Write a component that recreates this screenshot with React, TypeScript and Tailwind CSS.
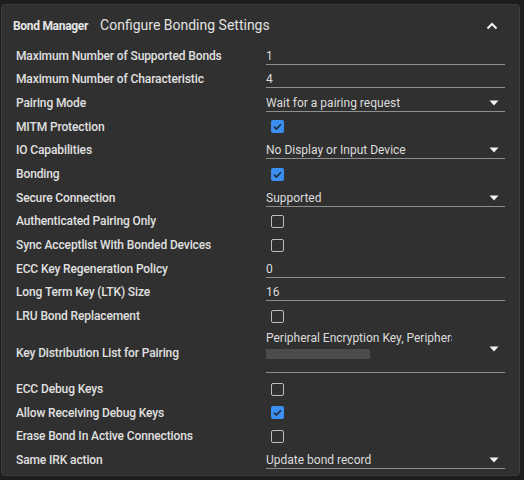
import React from "react";

type Row =
  | { label: string; kind: "input"; value: string }
  | { label: string; kind: "select"; value: string }
  | { label: string; kind: "check"; checked: boolean }
  | { label: string; kind: "multi"; value: string };

const rows: Row[] = [
  { label: "Maximum Number of Supported Bonds", kind: "input", value: "1" },
  { label: "Maximum Number of Characteristic", kind: "input", value: "4" },
  { label: "Pairing Mode", kind: "select", value: "Wait for a pairing request" },
  { label: "MITM Protection", kind: "check", checked: true },
  { label: "IO Capabilities", kind: "select", value: "No Display or Input Device" },
  { label: "Bonding", kind: "check", checked: true },
  { label: "Secure Connection", kind: "select", value: "Supported" },
  { label: "Authenticated Pairing Only", kind: "check", checked: false },
  { label: "Sync Acceptlist With Bonded Devices", kind: "check", checked: false },
  { label: "ECC Key Regeneration Policy", kind: "input", value: "0" },
  { label: "Long Term Key (LTK) Size", kind: "input", value: "16" },
  { label: "LRU Bond Replacement", kind: "check", checked: false },
  { label: "Key Distribution List for Pairing", kind: "multi", value: "Peripheral Encryption Key, Periphera" },
  { label: "ECC Debug Keys", kind: "check", checked: false },
  { label: "Allow Receiving Debug Keys", kind: "check", checked: true },
  { label: "Erase Bond In Active Connections", kind: "check", checked: false },
  { label: "Same IRK action", kind: "select", value: "Update bond record" },
];

function Arrow() {
  return (
    <svg width="10" height="6" viewBox="0 0 10 6" className="shrink-0">
      <path d="M0.5 0.5 L9.5 0.5 L5 5.5 Z" fill="#f2f2f2" />
    </svg>
  );
}

function Check({ checked }: { checked: boolean }) {
  if (checked) {
    return (
      <div className="ml-[5px] w-[13px] h-[13px] rounded-[2px] bg-[#3a8ff0] flex items-center justify-center">
        <svg width="11" height="11" viewBox="0 0 11 11">
          <path d="M2 5.6 L4.4 8 L9 3.2" fill="none" stroke="#1f2a3a" strokeWidth="1.6" />
        </svg>
      </div>
    );
  }
  return <div className="ml-[5px] w-[13px] h-[13px] rounded-[2px] border-[1.5px] border-[#bdbdbd]" />;
}

function Value({ row }: { row: Row }) {
  if (row.kind === "check") {
    return (
      <div className="h-full flex items-center">
        <Check checked={row.checked} />
      </div>
    );
  }
  if (row.kind === "multi") {
    return (
      <div className="h-full pb-[4px] flex flex-col">
        <div className="flex-1 border-b border-[#8e8e8e] flex items-start pt-[3px]">
          <div className="flex-1 min-w-0">
            <div className="text-[12px] leading-[15px] text-[#dcdcdc] whitespace-nowrap overflow-hidden w-[186px]">
              {row.value}
            </div>
            <div className="mt-[3px] w-[104px] h-[10px] bg-[#4b4b4b]" />
          </div>
          <div className="pt-[15px] pr-[6px]">
            <Arrow />
          </div>
        </div>
      </div>
    );
  }
  return (
    <div className="h-full pb-[3px] flex flex-col">
      <div className="flex-1 border-b border-[#8e8e8e] flex items-end justify-between">
        <span className="text-[12px] leading-[15px] text-[#dcdcdc] whitespace-nowrap">{row.value}</span>
        {row.kind === "select" && (
          <span className="pr-[6px] pb-[5px]">
            <Arrow />
          </span>
        )}
      </div>
    </div>
  );
}

export default function App() {
  return (
    <div
      className="w-[524px] h-[480px] bg-[#1d1d1d] pt-[4px] pl-[1px] pr-[4px] pb-[4px]"
      style={{ fontFamily: "Roboto, 'Noto Sans', sans-serif" }}
    >
      <div className="h-full rounded-[4px] border border-[#3c3c3c] bg-[#303030] flex flex-col">
        <div className="h-[39px] flex items-center pl-[11px] pr-[21px] pt-[2px]">
          <span className="text-[12px] font-bold text-[#e6e6e6] tracking-[-0.3px]">Bond Manager</span>
          <span className="ml-[12px] text-[14px] text-[#e2e2e2]">Configure Bonding Settings</span>
          <span className="ml-auto">
            <svg width="12" height="8" viewBox="0 0 12 8">
              <path d="M1.5 6.5 L6 2 L10.5 6.5" fill="none" stroke="#f0f0f0" strokeWidth="2" />
            </svg>
          </span>
        </div>
        <div className="flex flex-col pl-[14px] pr-[13px]">
          {rows.map((r, i) => (
            <div
              key={i}
              className={`grid grid-cols-[250px_239px] ${r.kind === "multi" ? "h-[49.3px]" : "h-[23.67px]"}`}
            >
              <div className="flex items-center text-[12px] font-medium tracking-[-0.12px] text-[#e0e0e0] whitespace-nowrap">
                {r.label}
              </div>
              <Value row={r} />
            </div>
          ))}
        </div>
      </div>
    </div>
  );
}
